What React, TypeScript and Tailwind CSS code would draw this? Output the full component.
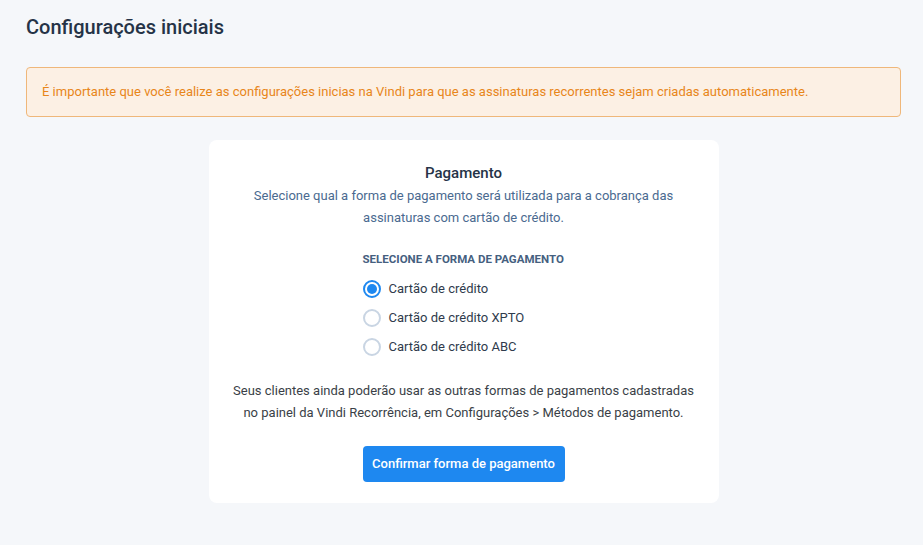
import React, { useState } from 'react';

const options = ['Cartão de crédito', 'Cartão de crédito XPTO', 'Cartão de crédito ABC'];

function Radio({ checked }: { checked: boolean }) {
  return (
    <span
      className={
        'flex h-[18px] w-[18px] shrink-0 items-center justify-center rounded-full border-2 bg-white ' +
        (checked ? 'border-[#1e88f0]' : 'border-[#c9d5e3]')
      }
    >
      {checked && <span className="h-[10px] w-[10px] rounded-full bg-[#1e88f0]" />}
    </span>
  );
}

export default function App() {
  const [selected, setSelected] = useState(0);

  return (
    <div className="min-h-[545px] bg-[#f5f7fa] pl-[26px] pr-[22px] pt-[15px] font-['Roboto',sans-serif]">
      <h1 className="text-[20px] font-medium leading-[24px] text-[#253347]">Configurações iniciais</h1>

      {/* Aviso */}
      <div className="mt-[28px] flex h-[50px] items-center rounded-[4px] border border-[#efb77a] bg-[#fcf0e4] px-[15px]">
        <p className="text-[13px] text-[#e8861a]">
          É importante que você realize as configurações inicias na Vindi para que as assinaturas recorrentes sejam
          criadas automaticamente.
        </p>
      </div>

      {/* Cartão de pagamento */}
      <div className="mx-auto mt-[23px] w-[510px] rounded-[8px] bg-white pt-[22px] pb-[21px] text-center">
        <h2 className="text-[15px] font-medium leading-[22px] text-[#253347]">Pagamento</h2>
        <p className="mx-auto mt-[1px] w-[430px] text-[13px] leading-[22px] text-[#4a6a90]">
          Selecione qual a forma de pagamento será utilizada para a cobrança das assinaturas com cartão de crédito.
        </p>

        <div className="mx-auto mt-[22px] w-[202px] text-left">
          <div className="whitespace-nowrap text-[11.5px] font-bold leading-[16px] text-[#45607f]">
            SELECIONE A FORMA DE PAGAMENTO
          </div>
          <div className="mt-[13px] flex flex-col gap-[11px]">
            {options.map((label, i) => (
              <label
                key={label}
                className="flex cursor-pointer items-center gap-[8px] whitespace-nowrap"
                onClick={() => setSelected(i)}
              >
                <Radio checked={selected === i} />
                <span className="text-[13px] leading-[18px] text-[#2f3b4c]">{label}</span>
              </label>
            ))}
          </div>
        </div>

        <p className="mx-auto mt-[24px] w-[470px] text-[13px] leading-[22px] text-[#3a3f47]">
          Seus clientes ainda poderão usar as outras formas de pagamentos cadastradas no painel da Vindi Recorrência, em
          Configurações &gt; Métodos de pagamento.
        </p>

        <button className="mt-[22px] h-[36px] w-[202px] rounded-[4px] bg-[#1e88f0] text-[13px] font-medium text-white">
          Confirmar forma de pagamento
        </button>
      </div>
    </div>
  );
}
